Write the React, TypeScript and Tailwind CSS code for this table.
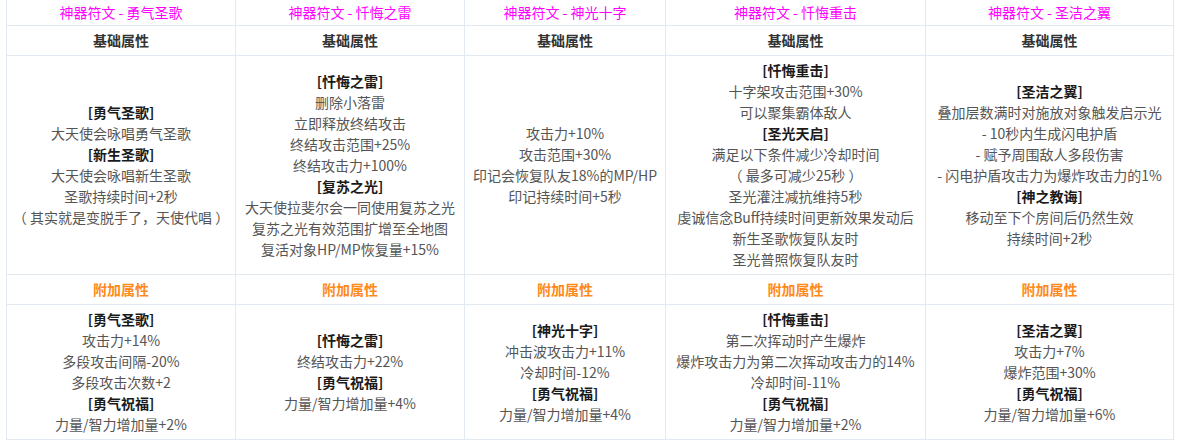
import React from "react";

type Line = { t: string; b?: boolean };

const titles = [
  "神器符文 - 勇气圣歌",
  "神器符文 - 忏悔之雷",
  "神器符文 - 神光十字",
  "神器符文 - 忏悔重击",
  "神器符文 - 圣洁之翼",
];

const L = (s: string): Line => (s.startsWith("[") ? { t: s, b: true } : { t: s });

const base: Line[][] = [
  ["[勇气圣歌]", "大天使会咏唱勇气圣歌", "[新生圣歌]", "大天使会咏唱新生圣歌", "圣歌持续时间+2秒", "（ 其实就是变脱手了，天使代唱 ）"].map(L),
  ["[忏悔之雷]", "删除小落雷", "立即释放终结攻击", "终结攻击范围+25%", "终结攻击力+100%", "[复苏之光]", "大天使拉斐尔会一同使用复苏之光", "复苏之光有效范围扩增至全地图", "复活对象HP/MP恢复量+15%"].map(L),
  ["攻击力+10%", "攻击范围+30%", "印记会恢复队友18%的MP/HP", "印记持续时间+5秒"].map(L),
  ["[忏悔重击]", "十字架攻击范围+30%", "可以聚集霸体敌人", "[圣光天启]", "满足以下条件减少冷却时间", "（ 最多可减少25秒 ）", "圣光灌注减抗维持5秒", "虔诚信念Buff持续时间更新效果发动后", "新生圣歌恢复队友时", "圣光普照恢复队友时"].map(L),
  ["[圣洁之翼]", "叠加层数满时对施放对象触发启示光", "- 10秒内生成闪电护盾", "- 赋予周围敌人多段伤害", "- 闪电护盾攻击力为爆炸攻击力的1%", "[神之教诲]", "移动至下个房间后仍然生效", "持续时间+2秒"].map(L),
];

const extra: Line[][] = [
  ["[勇气圣歌]", "攻击力+14%", "多段攻击间隔-20%", "多段攻击次数+2", "[勇气祝福]", "力量/智力增加量+2%"].map(L),
  ["[忏悔之雷]", "终结攻击力+22%", "[勇气祝福]", "力量/智力增加量+4%"].map(L),
  ["[神光十字]", "冲击波攻击力+11%", "冷却时间-12%", "[勇气祝福]", "力量/智力增加量+4%"].map(L),
  ["[忏悔重击]", "第二次挥动时产生爆炸", "爆炸攻击力为第二次挥动攻击力的14%", "冷却时间-11%", "[勇气祝福]", "力量/智力增加量+2%"].map(L),
  ["[圣洁之翼]", "攻击力+7%", "爆炸范围+30%", "[勇气祝福]", "力量/智力增加量+6%"].map(L),
];

const cell = "flex flex-col items-center justify-center text-center border-r border-b border-[#e2e9f1]";

function Lines({ lines }: { lines: Line[] }) {
  return (
    <>
      {lines.map((l, i) => (
        <div key={i} className={l.b ? "font-bold text-[#1a1a1a]" : "text-[#555555]"}>
          {l.t}
        </div>
      ))}
    </>
  );
}

export default function App() {
  return (
    <div className="w-[1204px] h-[444px] bg-white overflow-hidden">
      <div
        className="ml-[6px] w-[1168px] grid grid-cols-[229px_229px_201px_260px_248px] grid-rows-[26px_30px_219px_30px_135px] border-l border-[#e2e9f1] text-[14px] leading-[21px]"
        style={{ fontFamily: '"Noto Sans CJK SC", "Noto Sans", sans-serif' }}
      >
        {titles.map((t, i) => (
          <div key={"t" + i} className={cell + " text-[#ff00ff]"}>
            {t}
          </div>
        ))}
        {titles.map((_, i) => (
          <div key={"b" + i} className={cell + " font-bold text-[#333333]"}>
            基础属性
          </div>
        ))}
        {base.map((ls, i) => (
          <div key={"bc" + i} className={cell}>
            <Lines lines={ls} />
          </div>
        ))}
        {titles.map((_, i) => (
          <div key={"e" + i} className={cell + " font-bold text-[#ff8a1c]"}>
            附加属性
          </div>
        ))}
        {extra.map((ls, i) => (
          <div key={"ec" + i} className={cell}>
            <Lines lines={ls} />
          </div>
        ))}
      </div>
    </div>
  );
}
